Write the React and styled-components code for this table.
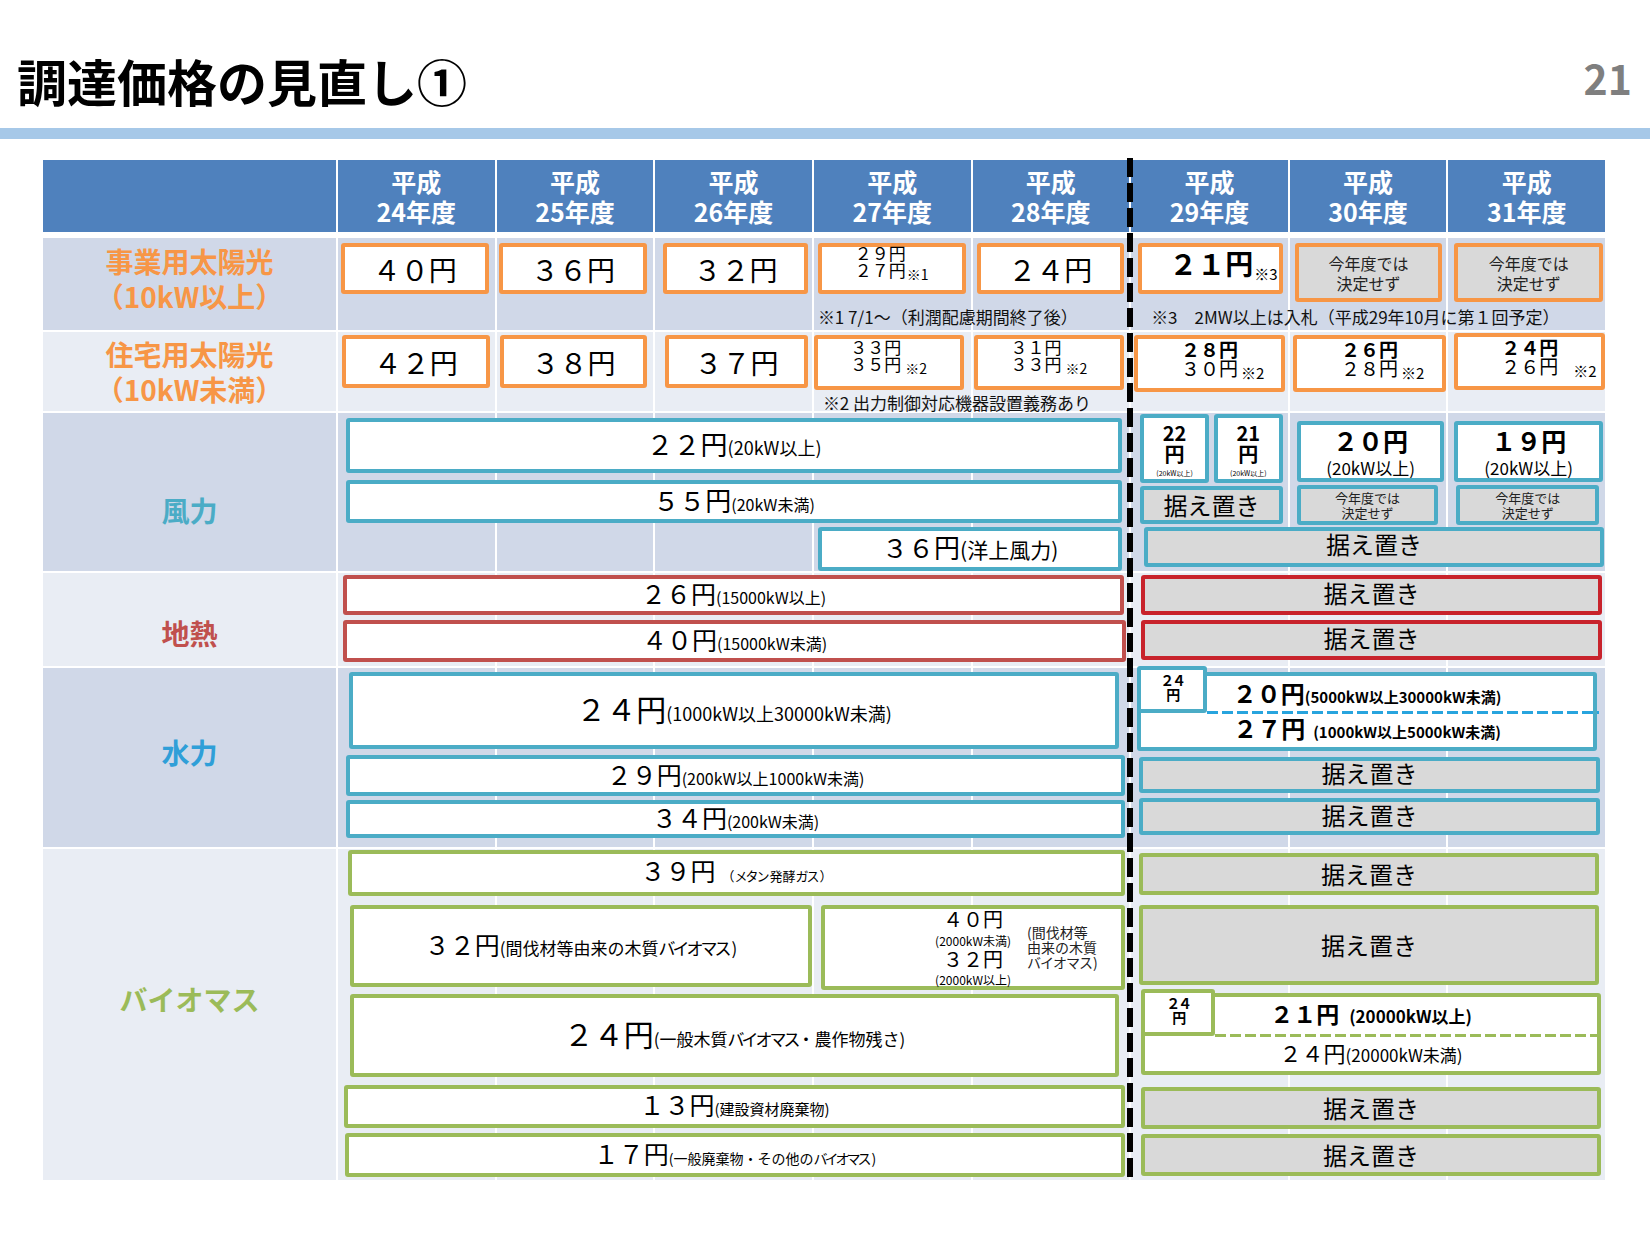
import React from "react";
import styled, { createGlobalStyle } from "styled-components";

const C = {
  head: "#4f81bd",
  dark: "#d0d8e8",
  light: "#e9edf4",
  orange: "#f79646",
  blue: "#4bacc6",
  water: "#2f9fd8",
  red: "#c0504d",
  red2: "#c8232c",
  green: "#9bbb59",
  gray: "#d9d9d9",
  dash: "#27a4de",
};

const GlobalStyle = createGlobalStyle`
  * { box-sizing: border-box; }
  html, body { margin: 0; padding: 0; background: #fff; }
  body { font-family: "Noto Sans CJK JP", "Noto Sans", sans-serif; color: #000; }
`;

const Slide = styled.div`
  width: 1650px;
  height: 1240px;
  background: #fff;
  overflow: hidden;
`;

const TitleBar = styled.header`
  display: flex;
  justify-content: space-between;
  align-items: flex-start;
  height: 128px;
  padding: 55px 18px 0 17px;
`;

const Title = styled.h1`
  margin: 0;
  font-size: 50px;
  line-height: 50px;
  font-weight: 700;
`;

const PageNo = styled.div`
  margin-top: 2px;
  font-size: 41px;
  line-height: 41px;
  font-weight: 700;
  color: #7f7f7f;
`;

const Rule = styled.div`
  height: 11px;
  background: #a6c8e8;
`;

const Table = styled.div`
  position: relative;
  width: 1562px;
  margin: 21px 0 0 43px;
  display: flex;
  flex-direction: column;
  gap: 2px;
`;

const COLS = "293px repeat(8, minmax(0, 1fr))";

const HeaderRow = styled.div`
  display: grid;
  grid-template-columns: ${COLS};
  column-gap: 2px;
  height: 72px;
  margin-bottom: 4px;
`;

const HeadCell = styled.div`
  background: ${C.head};
  color: #fff;
  display: flex;
  align-items: center;
  justify-content: center;
  text-align: center;
  font-size: 25px;
  line-height: 30px;
  font-weight: 700;
`;

const Row = styled.div`
  display: grid;
  grid-template-columns: ${COLS};
  grid-template-rows: ${(p) => p.$rows || "minmax(0, 1fr)"};
  column-gap: 2px;
  height: ${(p) => p.$h}px;
`;

const Band = styled.div`
  grid-column: ${(p) => p.$col};
  grid-row: 1 / -1;
  background: ${(p) => p.$bg};
  display: flex;
  flex-direction: column;
  padding: ${(p) => p.$pad || 0};
  min-width: 0;
`;

const Label = styled.div`
  grid-column: 1;
  grid-row: 1 / -1;
  background: ${(p) => p.$bg};
  color: ${(p) => p.$c};
  display: flex;
  align-items: center;
  justify-content: center;
  text-align: center;
  font-size: 28px;
  line-height: 35px;
  font-weight: 700;
  padding: ${(p) => p.$pt || 0}px 0 ${(p) => p.$pb || 0}px;
`;

const Lane = styled.div`
  grid-area: ${(p) => p.$area};
  display: flex;
  flex-direction: column;
  padding: ${(p) => p.$pad || 0};
  min-width: 0;
`;

const Pair = styled.div`
  flex: none;
  display: flex;
  align-items: flex-start;
  gap: ${(p) => p.$gap}px;
  height: ${(p) => p.$h}px;
  margin: ${(p) => p.$m || 0};
`;

const Box = styled.div`
  position: relative;
  flex: ${(p) => (p.$grow ? "1 1 0" : "none")};
  height: ${(p) => p.$h}px;
  ${(p) => (p.$w ? `width: ${p.$w}px;` : "")}
  align-self: ${(p) => p.$self || "stretch"};
  margin: ${(p) => p.$m || 0};
  border: 4px solid ${(p) => p.$c};
  border-radius: 3px;
  background: ${(p) => (p.$gray ? C.gray : "#fff")};
  display: flex;
  flex-direction: column;
  align-items: center;
  justify-content: center;
  text-align: center;
  white-space: nowrap;
  padding-bottom: ${(p) => p.$pb || 0}px;
`;

const Line = styled.div`
  line-height: ${(p) => p.$lh || 30}px;
  white-space: nowrap;
`;

const Val = styled.span`
  font-size: ${(p) => p.$s}px;
  font-weight: ${(p) => (p.$b ? 700 : 400)};
`;

const Tag = styled.span`
  font-size: ${(p) => p.$s}px;
  font-weight: ${(p) => (p.$b ? 700 : 400)};
  margin-left: ${(p) => p.$ml || 0}px;
`;

const Kana = styled.span`
  letter-spacing: ${(p) => p.$ls ?? -3}px;
  margin-right: ${(p) => -(p.$ls ?? -3)}px;
`;

const Mark = styled.span`
  font-size: ${(p) => p.$s || 14}px;
  font-weight: 400;
  margin-left: ${(p) => p.$ml || 1}px;
  margin-right: ${(p) => p.$mr || 0}px;
  vertical-align: ${(p) => p.$va || -3}px;
`;

const Pile = styled.div`
  font-size: ${(p) => p.$s || 17}px;
  line-height: ${(p) => p.$lh || 17}px;
  text-align: left;
`;

const Memo = styled.div`
  font-size: ${(p) => p.$s}px;
  line-height: ${(p) => p.$lh}px;
  color: #222;
`;

const Hold = styled.span`
  font-size: 24px;
  line-height: 28px;
`;

const Note = styled.div`
  grid-area: ${(p) => p.$area};
  align-self: end;
  font-size: 17px;
  line-height: 17px;
  white-space: nowrap;
  padding-left: ${(p) => p.$pl}px;
  margin-bottom: ${(p) => p.$mb || 0}px;
  color: #111;
`;

const Tiny = styled.div`
  display: flex;
  flex-direction: column;
  align-items: center;
  padding-top: 4px;
`;

const Corner = styled.div`
  position: absolute;
  left: -4px;
  top: ${(p) => p.$top}px;
  width: ${(p) => p.$w}px;
  height: 47px;
  border: 4px solid ${(p) => p.$c};
  border-radius: 3px;
  background: #fff;
  display: flex;
  flex-direction: column;
  align-items: center;
  padding-top: 3px;
  font-size: 14px;
  line-height: 14px;
  font-weight: 700;
  letter-spacing: -2px;
`;

const Dash = styled.div`
  position: absolute;
  left: ${(p) => p.$left}px;
  right: -6px;
  top: ${(p) => p.$top}px;
  height: 3px;
  background: repeating-linear-gradient(
    to right,
    ${(p) => p.$c} 0 11px,
    transparent 11px 15px
  );
`;

const Split = styled.div`
  display: grid;
  grid-template-columns: 1fr auto 1fr;
  align-items: center;
  width: 100%;
`;

const SplitMain = styled.div`
  grid-column: 2;
  display: flex;
  flex-direction: column;
  align-items: center;
`;

const SplitSide = styled.div`
  grid-column: 3;
  justify-self: start;
  margin-left: 16px;
  font-size: 14px;
  line-height: 15px;
  text-align: left;
  color: #222;
`;

const Divider = styled.div`
  position: absolute;
  left: 1084px;
  top: -2px;
  bottom: -2px;
  width: 6px;
  background: repeating-linear-gradient(
    to bottom,
    #000 0 19px,
    transparent 19px 25px
  );
  pointer-events: none;
`;

const YEARS = ["24", "25", "26", "27", "28", "29", "30", "31"];
const COLS_IDX = [2, 3, 4, 5, 6, 7, 8, 9];

const Bands = ({ bg }) =>
  COLS_IDX.map((c) => <Band key={c} $col={c} $bg={bg} />);

const Hold1 = () => <Hold>据え置き</Hold>;

export default function App() {
  return (
    <>
      <GlobalStyle />
      <Slide>
        <TitleBar>
          <Title>調達価格の見直し①</Title>
          <PageNo>21</PageNo>
        </TitleBar>
        <Rule />
        <Table>
          <HeaderRow>
            <HeadCell />
            {YEARS.map((y) => (
              <HeadCell key={y}>
                平成
                <br />
                {y}年度
              </HeadCell>
            ))}
          </HeaderRow>

          {/* 事業用太陽光 */}
          <Row $h={92}>
            <Label $bg={C.dark} $c={C.orange} $pb={10}>
              事業用太陽光
              <br />
              （10kW以上）
            </Label>
            <Band $col={2} $bg={C.dark} $pad="5px 6px 0 3px">
              <Box $c={C.orange} $h={51}>
                <Val $s={28}>４０円</Val>
              </Box>
            </Band>
            <Band $col={3} $bg={C.dark} $pad="5px 6px 0 2px">
              <Box $c={C.orange} $h={51}>
                <Val $s={28}>３６円</Val>
              </Box>
            </Band>
            <Band $col={4} $bg={C.dark} $pad="5px 4px 0 8px">
              <Box $c={C.orange} $h={51}>
                <Val $s={28}>３２円</Val>
              </Box>
            </Band>
            <Band $col={5} $bg={C.dark} $pad="5px 5px 0 4px">
              <Box $c={C.orange} $h={51} $pb={10}>
                <Pile>
                  <div>２９円</div>
                  <div>
                    ２７円<Mark>※1</Mark>
                  </div>
                </Pile>
              </Box>
            </Band>
            <Band $col={6} $bg={C.dark} $pad="5px 5px 0 4px">
              <Box $c={C.orange} $h={51}>
                <Val $s={28}>２４円</Val>
              </Box>
            </Band>
            <Band $col={7} $bg={C.dark} $pad="5px 5px 0 7px">
              <Box $c={C.orange} $h={51}>
                <Line $lh={34}>
                  <Val $s={28} $b>
                    ２１円
                  </Val>
                  <Mark $s={15} $mr={-26} $va={-5}>
                    ※3
                  </Mark>
                </Line>
              </Box>
            </Band>
            <Band $col={8} $bg={C.dark} $pad="5px 4px 0 5px">
              <Box $c={C.orange} $h={59} $gray>
                <Memo $s={16} $lh={20}>
                  今年度では
                  <br />
                  決定せず
                </Memo>
              </Box>
            </Band>
            <Band $col={9} $bg={C.dark} $pad="5px 2px 0 6px">
              <Box $c={C.orange} $h={59} $gray>
                <Memo $s={16} $lh={20}>
                  今年度では
                  <br />
                  決定せず
                </Memo>
              </Box>
            </Band>
            <Note $area="1 / 5 / 2 / 7" $pl={4} $mb={5}>
              ※1 7/1～（利潤配慮期間終了後）
            </Note>
            <Note $area="1 / 7 / 2 / 10" $pl={20} $mb={5}>
              ※3　2MW以上は入札（平成29年10月に第１回予定）
            </Note>
          </Row>

          {/* 住宅用太陽光 */}
          <Row $h={79}>
            <Label $bg={C.light} $c={C.orange}>
              住宅用太陽光
              <br />
              （10kW未満）
            </Label>
            <Band $col={2} $bg={C.light} $pad="3px 5px 0 4px">
              <Box $c={C.orange} $h={53}>
                <Val $s={28}>４２円</Val>
              </Box>
            </Band>
            <Band $col={3} $bg={C.light} $pad="3px 6px 0 3px">
              <Box $c={C.orange} $h={53}>
                <Val $s={28}>３８円</Val>
              </Box>
            </Band>
            <Band $col={4} $bg={C.light} $pad="3px 4px 0 10px">
              <Box $c={C.orange} $h={53}>
                <Val $s={28}>３７円</Val>
              </Box>
            </Band>
            <Band $col={5} $bg={C.light} $pad="3px 7px 0 0">
              <Box $c={C.orange} $h={55} $pb={10}>
                <Pile>
                  <div>３３円</div>
                  <div>
                    ３５円<Mark $ml={4}>※2</Mark>
                  </div>
                </Pile>
              </Box>
            </Band>
            <Band $col={6} $bg={C.light} $pad="3px 5px 0 1px">
              <Box $c={C.orange} $h={55} $pb={10}>
                <Pile>
                  <div>３１円</div>
                  <div>
                    ３３円<Mark $ml={4}>※2</Mark>
                  </div>
                </Pile>
              </Box>
            </Band>
            <Band $col={7} $bg={C.light} $pad="3px 3px 0 3px">
              <Box $c={C.orange} $h={57} $pb={6}>
                <Pile $s={19} $lh={19}>
                  <div>
                    <b>２８円</b>
                  </div>
                  <div>
                    ３０円
                    <Mark $s={15} $ml={3} $mr={-30}>
                      ※2
                    </Mark>
                  </div>
                </Pile>
              </Box>
            </Band>
            <Band $col={8} $bg={C.light} $pad="3px 0 0 3px">
              <Box $c={C.orange} $h={57} $pb={6}>
                <Pile $s={19} $lh={19}>
                  <div>
                    <b>２６円</b>
                  </div>
                  <div>
                    ２８円
                    <Mark $s={15} $ml={3} $mr={-30}>
                      ※2
                    </Mark>
                  </div>
                </Pile>
              </Box>
            </Band>
            <Band $col={9} $bg={C.light} $pad="1px 0 0 6px">
              <Box $c={C.orange} $h={57} $pb={6}>
                <Pile $s={19} $lh={19}>
                  <div>
                    <b>２４円</b>
                  </div>
                  <div>
                    ２６円
                    <Mark $s={15} $ml={15} $mr={-42}>
                      ※2
                    </Mark>
                  </div>
                </Pile>
              </Box>
            </Band>
            <Note $area="1 / 5 / 2 / 7" $pl={9} $mb={0}>
              ※2 出力制御対応機器設置義務あり
            </Note>
          </Row>

          {/* 風力 */}
          <Row $h={158} $rows="112px 46px">
            <Label $bg={C.dark} $c={C.blue} $pt={36}>
              風力
            </Label>
            <Bands bg={C.dark} />
            <Lane $area="1 / 2 / 3 / 7" $pad="5px 7px 0 8px">
              <Box $c={C.blue} $h={55}>
                <Line $lh={34}>
                  <Val $s={27}>２２円</Val>
                  <Tag $s={18}>(20kW以上)</Tag>
                </Line>
              </Box>
              <Box $c={C.blue} $h={43} $m="7px 0 0">
                <Line $lh={32}>
                  <Val $s={26}>５５円</Val>
                  <Tag $s={16}>(20kW未満)</Tag>
                </Line>
              </Box>
              <Box $c={C.blue} $h={44} $w={304} $self="flex-end" $m="4px 0 0">
                <Line $lh={32}>
                  <Val $s={26}>３６円</Val>
                  <Tag $s={21}>(洋上風力)</Tag>
                </Line>
              </Box>
            </Lane>
            <Lane $area="1 / 7 / 2 / 8" $pad="1px 5px 0 9px">
              <Pair $gap={5} $h={69}>
                <Box $c={C.blue} $h={69} $grow>
                  <Tiny>
                    <Line $lh={20}>
                      <Val $s={20} $b>
                        22
                      </Val>
                    </Line>
                    <Line $lh={20}>
                      <Val $s={20} $b>
                        円
                      </Val>
                    </Line>
                    <Line $lh={9}>
                      <Tag $s={7}>(20kW以上)</Tag>
                    </Line>
                  </Tiny>
                </Box>
                <Box $c={C.blue} $h={69} $grow>
                  <Tiny>
                    <Line $lh={20}>
                      <Val $s={20} $b>
                        21
                      </Val>
                    </Line>
                    <Line $lh={20}>
                      <Val $s={20} $b>
                        円
                      </Val>
                    </Line>
                    <Line $lh={9}>
                      <Tag $s={7}>(20kW以上)</Tag>
                    </Line>
                  </Tiny>
                </Box>
              </Pair>
              <Box $c={C.blue} $h={38} $gray $m="3px 0 0">
                <Hold1 />
              </Box>
            </Lane>
            <Lane $area="1 / 8 / 2 / 9" $pad="8px 2px 0 7px">
              <Box $c={C.blue} $h={61}>
                <Line $lh={28}>
                  <Val $s={25} $b>
                    ２０円
                  </Val>
                </Line>
                <Line $lh={20}>
                  <Tag $s={17}>(20kW以上)</Tag>
                </Line>
              </Box>
              <Box $c={C.blue} $h={40} $gray $m="3px 6px 0 0">
                <Memo $s={13} $lh={15}>
                  今年度では
                  <br />
                  決定せず
                </Memo>
              </Box>
            </Lane>
            <Lane $area="1 / 9 / 2 / 10" $pad="8px 2px 0 6px">
              <Box $c={C.blue} $h={61}>
                <Line $lh={28}>
                  <Val $s={25} $b>
                    １９円
                  </Val>
                </Line>
                <Line $lh={20}>
                  <Tag $s={17}>(20kW以上)</Tag>
                </Line>
              </Box>
              <Box $c={C.blue} $h={40} $gray $m="3px 4px 0 2px">
                <Memo $s={13} $lh={15}>
                  今年度では
                  <br />
                  決定せず
                </Memo>
              </Box>
            </Lane>
            <Lane $area="2 / 7 / 3 / 10" $pad="2px 1px 0 13px">
              <Box $c={C.blue} $h={40} $gray $pb={6}>
                <Hold1 />
              </Box>
            </Lane>
          </Row>

          {/* 地熱 */}
          <Row $h={93}>
            <Label $bg={C.light} $c={C.red} $pt={28}>
              地熱
            </Label>
            <Bands bg={C.light} />
            <Lane $area="1 / 2 / 2 / 7" $pad="2px 5px 0 5px">
              <Box $c={C.red} $h={40}>
                <Line $lh={32}>
                  <Val $s={25}>２６円</Val>
                  <Tag $s={16}>(15000kW以上)</Tag>
                </Line>
              </Box>
              <Box $c={C.red} $h={42} $m="5px -2px 0 0">
                <Line $lh={32}>
                  <Val $s={25}>４０円</Val>
                  <Tag $s={16}>(15000kW未満)</Tag>
                </Line>
              </Box>
            </Lane>
            <Lane $area="1 / 7 / 2 / 10" $pad="2px 3px 0 10px">
              <Box $c={C.red2} $h={40} $gray $pb={4}>
                <Hold1 />
              </Box>
              <Box $c={C.red2} $h={40} $gray $pb={4} $m="5px 0 0">
                <Hold1 />
              </Box>
            </Lane>
          </Row>

          {/* 水力 */}
          <Row $h={179}>
            <Label $bg={C.dark} $c={C.water} $pb={10}>
              水力
            </Label>
            <Bands bg={C.dark} />
            <Lane $area="1 / 2 / 2 / 7" $pad="4px 4px 0 8px">
              <Box $c={C.blue} $h={77} $m="0 6px 0 3px">
                <Line $lh={36}>
                  <Val $s={30}>２４円</Val>
                  <Tag $s={18}>(1000kW以上30000kW未満)</Tag>
                </Line>
              </Box>
              <Box $c={C.blue} $h={41} $m="6px 0 0">
                <Line $lh={32}>
                  <Val $s={25}>２９円</Val>
                  <Tag $s={16}>(200kW以上1000kW未満)</Tag>
                </Line>
              </Box>
              <Box $c={C.blue} $h={38} $m="4px 0 0">
                <Line $lh={32}>
                  <Val $s={25}>３４円</Val>
                  <Tag $s={16}>(200kW未満)</Tag>
                </Line>
              </Box>
            </Lane>
            <Lane $area="1 / 7 / 2 / 10" $pad="4px 8px 0 6px">
              <Box $c={C.blue} $h={79}>
                <Corner $c={C.blue} $top={-10} $w={70}>
                  <span>２４</span>
                  <span>円</span>
                </Corner>
                <Dash $c={C.dash} $top={35} $left={66} />
                <Line $lh={31}>
                  <Val $s={24} $b>
                    ２０円
                  </Val>
                  <Tag $s={15} $b>
                    (5000kW以上30000kW未満)
                  </Tag>
                </Line>
                <Line $lh={31}>
                  <Val $s={24} $b>
                    ２７円
                  </Val>
                  <Tag $s={15} $b $ml={8}>
                    (1000kW以上5000kW未満)
                  </Tag>
                </Line>
              </Box>
              <Box $c={C.blue} $h={36} $gray $pb={4} $m="6px -3px 0 2px">
                <Hold1 />
              </Box>
              <Box $c={C.blue} $h={37} $gray $pb={4} $m="5px -3px 0 2px">
                <Hold1 />
              </Box>
            </Lane>
          </Row>

          {/* バイオマス */}
          <Row $h={331}>
            <Label $bg={C.light} $c={C.green} $pb={30}>
              バイオマス
            </Label>
            <Bands bg={C.light} />
            <Lane $area="1 / 2 / 2 / 7" $pad="1px 4px 0 5px">
              <Box $c={C.green} $h={46} $m="0 0 0 5px">
                <Line $lh={32}>
                  <Val $s={25}>３９円</Val>
                  <Tag $s={13} $ml={6}>
                    （<Kana $ls={-2}>メタン</Kana>発酵<Kana $ls={-2}>ガス</Kana>）
                  </Tag>
                </Line>
              </Box>
              <Pair $gap={9} $h={85} $m="9px 0 0 7px">
                <Box $c={C.green} $h={82} $w={462}>
                  <Line $lh={32}>
                    <Val $s={25}>３２円</Val>
                    <Tag $s={17}>
                      (間伐材等由来の木質<Kana>バイオマス</Kana>)
                    </Tag>
                  </Line>
                </Box>
                <Box $c={C.green} $h={85} $grow>
                  <Split>
                    <SplitMain>
                      <Line $lh={22}>
                        <Val $s={20}>４０円</Val>
                      </Line>
                      <Line $lh={16}>
                        <Tag $s={12}>(2000kW未満)</Tag>
                      </Line>
                      <Line $lh={20}>
                        <Val $s={20}>３２円</Val>
                      </Line>
                      <Line $lh={16}>
                        <Tag $s={12}>(2000kW以上)</Tag>
                      </Line>
                    </SplitMain>
                    <SplitSide>
                      (間伐材等
                      <br />
                      由来の木質
                      <br />
                      <Kana $ls={-1}>バイオマス</Kana>)
                    </SplitSide>
                  </Split>
                </Box>
              </Pair>
              <Box $c={C.green} $h={83} $m="4px 6px 0 7px">
                <Line $lh={36}>
                  <Val $s={30}>２４円</Val>
                  <Tag $s={17}>
                    (一般木質<Kana>バイオマス・</Kana>農作物残さ)
                  </Tag>
                </Line>
              </Box>
              <Box $c={C.green} $h={43} $m="8px 0 0 1px">
                <Line $lh={32}>
                  <Val $s={25}>１３円</Val>
                  <Tag $s={15}>(建設資材廃棄物)</Tag>
                </Line>
              </Box>
              <Box $c={C.green} $h={44} $m="5px 0 0 2px">
                <Line $lh={32}>
                  <Val $s={25}>１７円</Val>
                  <Tag $s={14}>
                    (一般廃棄物<Kana>・</Kana>その他の<Kana>バイオマス</Kana>)
                  </Tag>
                </Line>
              </Box>
            </Lane>
            <Lane $area="1 / 7 / 2 / 10" $pad="4px 4px 0 8px">
              <Box $c={C.green} $h={42} $gray $m="0 2px 0 0">
                <Hold1 />
              </Box>
              <Box $c={C.green} $h={80} $gray $m="10px 2px 0 0">
                <Hold1 />
              </Box>
              <Box $c={C.green} $h={82} $m="8px 0 0 2px">
                <Corner $c={C.green} $top={-8} $w={74}>
                  <span>２４</span>
                  <span>円</span>
                </Corner>
                <Dash $c={C.green} $top={37} $left={70} />
                <Line $lh={36}>
                  <Val $s={23} $b>
                    ２１円
                  </Val>
                  <Tag $s={17} $b $ml={10}>
                    (20000kW以上)
                  </Tag>
                </Line>
                <Line $lh={36}>
                  <Val $s={22}>２４円</Val>
                  <Tag $s={17}>(20000kW未満)</Tag>
                </Line>
              </Box>
              <Box $c={C.green} $h={42} $gray $m="12px 0 0 2px">
                <Hold1 />
              </Box>
              <Box $c={C.green} $h={42} $gray $m="5px 0 0 2px">
                <Hold1 />
              </Box>
            </Lane>
          </Row>

          <Divider />
        </Table>
      </Slide>
    </>
  );
}
